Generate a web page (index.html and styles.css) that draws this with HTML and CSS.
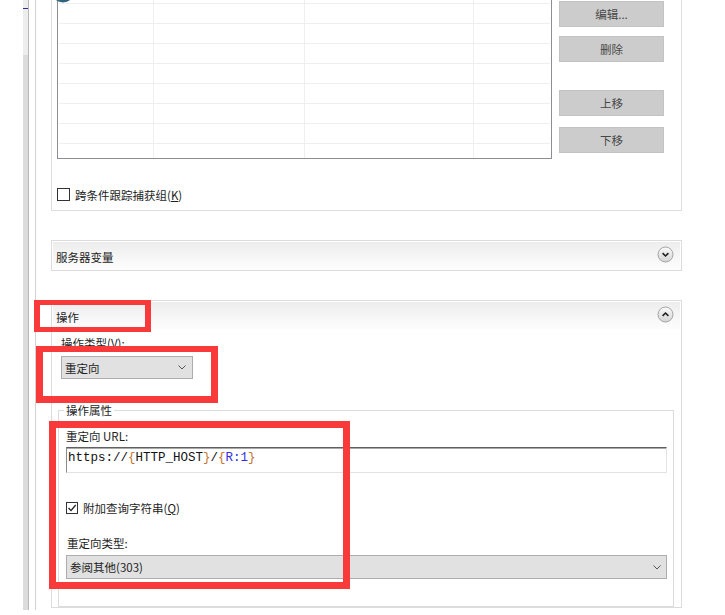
FILE: index.html
```html
<!DOCTYPE html>
<html lang="zh">
<head>
<meta charset="utf-8">
<title>操作</title>
<link rel="stylesheet" href="styles.css">
</head>
<body>
<div class="page">
  <div class="gutter"></div>
  <div class="scroll"></div>
  <div class="sep"></div>
  <div class="main">
    <section class="top-box">
      <div class="list-row">
        <div class="list">
          <div class="row"><span></span><span></span><span></span><span></span></div>
          <div class="row"><span></span><span></span><span></span><span></span></div>
          <div class="row"><span></span><span></span><span></span><span></span></div>
          <div class="row"><span></span><span></span><span></span><span></span></div>
          <div class="row"><span></span><span></span><span></span><span></span></div>
          <div class="row"><span></span><span></span><span></span><span></span></div>
          <div class="row"><span></span><span></span><span></span><span></span></div>
          <div class="row"><span></span><span></span><span></span><span></span></div>
          <div class="row"><span></span><span></span><span></span><span></span></div>
        </div>
        <div class="btns">
          <button class="btn">编辑...</button>
          <button class="btn btn-del">删除</button>
          <button class="btn btn-up">上移</button>
          <button class="btn btn-down">下移</button>
        </div>
      </div>
      <label class="check check-top"><span class="cb"></span><span>跨条件跟踪捕获组(<u>K</u>)</span></label>
    </section>

    <section class="panel panel-vars">
      <div class="panel-head">
        <span class="head-title">服务器变量</span>
        <svg class="chev" width="17" height="17" viewBox="0 0 17 17"><defs><linearGradient id="g1" x1="0" y1="0" x2="0" y2="1"><stop offset="0" stop-color="#fafafa"/><stop offset="1" stop-color="#d4d4d4"/></linearGradient></defs><circle cx="8.5" cy="8.5" r="7.5" fill="url(#g1)" stroke="#a3a3a3"/><polyline points="5.6,7.2 8.5,10 11.4,7.2" fill="none" stroke="#1f1f1f" stroke-width="1.6"/></svg>
      </div>
    </section>

    <section class="panel panel-action">
      <div class="panel-head">
        <span class="head-title">操作</span>
        <svg class="chev" width="17" height="17" viewBox="0 0 17 17"><defs><linearGradient id="g2" x1="0" y1="0" x2="0" y2="1"><stop offset="0" stop-color="#fafafa"/><stop offset="1" stop-color="#d4d4d4"/></linearGradient></defs><circle cx="8.5" cy="8.5" r="7.5" fill="url(#g2)" stroke="#a3a3a3"/><polyline points="5.6,9.8 8.5,7 11.4,9.8" fill="none" stroke="#1f1f1f" stroke-width="1.6"/></svg>
      </div>
      <div class="panel-body">
        <div class="lbl lbl-type">操作类型(<u>V</u>):</div>
        <div class="combo combo-small"><span>重定向</span><svg width="8" height="5" viewBox="0 0 8 5"><polyline points="0.5,0.5 4,4 7.5,0.5" fill="none" stroke="#555" stroke-width="1"/></svg></div>
        <fieldset class="group">
          <legend>操作属性</legend>
          <div class="lbl">重定向 URL:</div>
          <div class="url-box"><span class="t">https://</span><span class="b">{</span><span class="t">HTTP_HOST</span><span class="b">}</span><span class="t">/</span><span class="b">{</span><span class="r">R:1</span><span class="b">}</span></div>
          <label class="check check-q"><span class="cb cb-on"><svg width="10" height="10" viewBox="0 0 10 10"><polyline points="1.5,5 4,7.6 8.7,2" fill="none" stroke="#222" stroke-width="1.3"/></svg></span><span>附加查询字符串(<u>Q</u>)</span></label>
          <div class="lbl lbl-rtype">重定向类型:</div>
          <div class="combo combo-wide"><span>参阅其他(303)</span><svg width="8" height="5" viewBox="0 0 8 5"><polyline points="0.5,0.5 4,4 7.5,0.5" fill="none" stroke="#555" stroke-width="1"/></svg></div>
        </fieldset>
      </div>
    </section>
  </div>
</div>

<svg class="globe" width="24" height="24" viewBox="0 0 24 24"><defs><linearGradient id="gg" x1="0" y1="0" x2="1" y2="1"><stop offset="0" stop-color="#3f9a5a"/><stop offset="1" stop-color="#2c4f8c"/></linearGradient></defs><circle cx="12" cy="12" r="11.5" fill="url(#gg)"/></svg>

<div class="mark m1"></div>
<div class="mark m2"></div>
<div class="mark m3"></div>
</body>
</html>
```

FILE: styles.css
```css
* { box-sizing: border-box; }
html, body { margin: 0; background: #fff; }
body {
  position: relative;
  width: 725px;
  height: 615px;
  overflow: hidden;
  font-family: "Noto Sans CJK SC", "Microsoft YaHei", sans-serif;
  font-size: 11.5px;
  color: #1e1e1e;
}
u { text-decoration: underline; text-underline-offset: 1px; }

.page { display: flex; height: 610px; overflow: hidden; }
.gutter { flex: none; width: 23px; }
.scroll {
  flex: none;
  width: 6px;
  border-right: 1px solid #b9b9b9;
  background:
    linear-gradient(to bottom, transparent 8px, #2c3280 8px, #2c3280 9px, transparent 9px),
    linear-gradient(to bottom, #ededed 0, #ededed 55px, #dcdcdc 55px);
}
.sep { flex: none; width: 7px; border-right: 1px solid #d2d2d2; }
.main { flex: none; width: 646px; padding-left: 15px; }

/* top box */
.top-box {
  border: 1px solid #dedede;
  border-top: 0;
  padding: 0 17px 7px 5px;
}
.list-row { display: flex; align-items: flex-start; gap: 7px; }
.list {
  flex: none;
  width: 495px;
  height: 176px;
  margin-top: -17px;
  border: 1px solid #8d8e93;
  padding: 0 1px;
  overflow: hidden;
  background: #fff;
}
.row {
  display: grid;
  grid-template-columns: 95px 151px 169px 1fr;
  height: 20px;
  border-bottom: 1px solid #efefef;
}
.row span { border-right: 1px solid #efefef; }
.row span:last-child { border-right: 0; }

.btns { flex: none; width: 105px; display: flex; flex-direction: column; margin-top: 1px; }
.btn {
  height: 26px;
  border: 1px solid #c3c3c3;
  background: #cccccc;
  color: #474747;
  font: inherit;
  font-size: 11.5px;
  padding: 0;
}
.btn-del { margin-top: 9px; }
.btn-up { margin-top: 28px; }
.btn-down { margin-top: 11px; }

.check { display: flex; align-items: center; gap: 5px; height: 17px; }
.check-top { margin-top: 27px; }
.cb {
  flex: none;
  width: 13px;
  height: 13px;
  border: 1px solid #333;
  background: #fff;
  display: flex;
  align-items: center;
  justify-content: center;
}

/* panels */
.panel { border: 1px solid #dcdcdc; margin-top: 29px; }
.panel-head {
  height: 29px;
  display: flex;
  align-items: center;
  justify-content: space-between;
  padding: 0 7px 0 4px;
  background: linear-gradient(to bottom, #ececec 0, #f7f7f7 60%, #fdfdfd 100%);
  box-shadow: inset 1px 1px 0 #fff, inset -1px 0 0 #fff;
}
.head-title { padding-top: 3px; }
.chev { margin-bottom: 2px; }

.panel-body { padding: 5px 7px 0 6px; background: #fff; }
.lbl { line-height: 16px; }
.lbl-type { margin-left: 3px; }
.combo {
  display: flex;
  align-items: center;
  justify-content: space-between;
  background: #e1e1e1;
  border: 1px solid #adadad;
}
.combo-small { margin: 5px 0 0 3px; width: 132px; height: 23px; padding: 0 6px 0 3px; }
.combo-wide { margin-top: 4px; height: 24px; padding: 0 5px 0 3px; }

.group {
  margin: 23px 0 0 0;
  border: 1px solid #dcdcdc;
  padding: 10px 6px 27px 7px;
  min-width: 0;
}
.group legend { padding: 0 2px; margin-left: -2px; line-height: 16px; }

.url-box {
  margin-top: 3px;
  height: 26px;
  border-top: 1px solid #606060;
  border-left: 1px solid #8a8a8a;
  border-right: 1px solid #e3e3e3;
  border-bottom: 1px solid #e3e3e3;
  box-shadow: inset 0 1px 0 #a9a9a9;
  padding: 2px 0 0 1px;
  font-family: "Liberation Mono", "Courier New", monospace;
  font-size: 12.5px;
  line-height: 16px;
  white-space: pre;
}
.url-box .t { color: #111; }
.url-box .b { color: #c4742f; }
.url-box .r { color: #2e2ee6; }

.check-q { margin-top: 27px; height: 16px; }
.check-q .cb { width: 12px; height: 12px; }
.lbl-rtype { margin-top: 19px; padding-left: 1px; }

/* overlays */
.globe { position: absolute; left: 51px; top: -21px; }
.mark { position: absolute; border: 7px solid #f83a3a; }
.m1 { left: 34px; top: 300px; width: 117px; height: 32px; border-width: 5px 6px; }
.m2 { left: 36px; top: 346px; width: 182px; height: 57px; border-width: 6px 7px 7px; }
.m3 { left: 49px; top: 421px; width: 301px; height: 168px; }
```
